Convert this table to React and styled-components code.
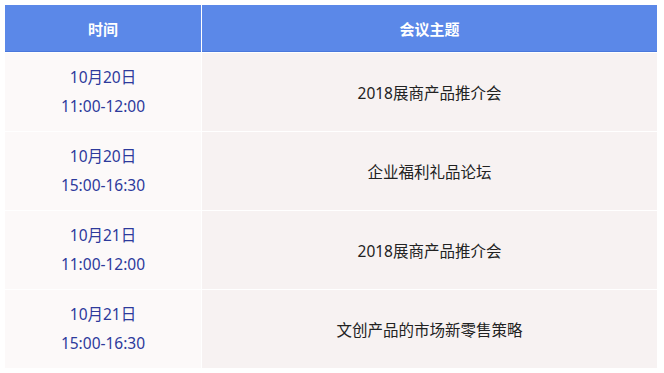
import React from "react";
import styled, { createGlobalStyle } from "styled-components";

const Global = createGlobalStyle`
  html, body { margin: 0; padding: 0; background: #ffffff; }
  body { font-family: "Noto Sans", "Noto Sans CJK SC", sans-serif; }
`;

const Page = styled.div`
  padding: 5px 7px 0 5px;
`;

const Table = styled.div`
  display: grid;
  grid-template-columns: 196px 1fr;
  column-gap: 1px;
  row-gap: 1px;
  background: #ffffff;
`;

const HeadCell = styled.div`
  height: 46px;
  background: #5b88e8;
  border-bottom: 1px solid #4a78dc;
  color: #ffffff;
  font-weight: 700;
  font-size: 15px;
  display: flex;
  align-items: center;
  justify-content: center;
`;

const Cell = styled.div`
  height: 78px;
  background: ${(p) => (p.$alt ? "#f7f2f2" : "#fcf9f9")};
  color: ${(p) => (p.$alt ? "#222222" : "#2d3a9c")};
  font-size: 15.5px;
  display: flex;
  flex-direction: column;
  align-items: center;
  justify-content: center;
  text-align: center;
`;

const Line = styled.div`
  line-height: 29px;
`;

const rows = [
  ["10月20日", "11:00-12:00", "2018展商产品推介会"],
  ["10月20日", "15:00-16:30", "企业福利礼品论坛"],
  ["10月21日", "11:00-12:00", "2018展商产品推介会"],
  ["10月21日", "15:00-16:30", "文创产品的市场新零售策略"],
];

export default function App() {
  return (
    <Page>
      <Global />
      <Table>
        <HeadCell>时间</HeadCell>
        <HeadCell>会议主题</HeadCell>
        {rows.map(([d, t, topic], i) => (
          <React.Fragment key={i}>
            <Cell>
              <Line>{d}</Line>
              <Line>{t}</Line>
            </Cell>
            <Cell $alt>{topic}</Cell>
          </React.Fragment>
        ))}
      </Table>
    </Page>
  );
}
